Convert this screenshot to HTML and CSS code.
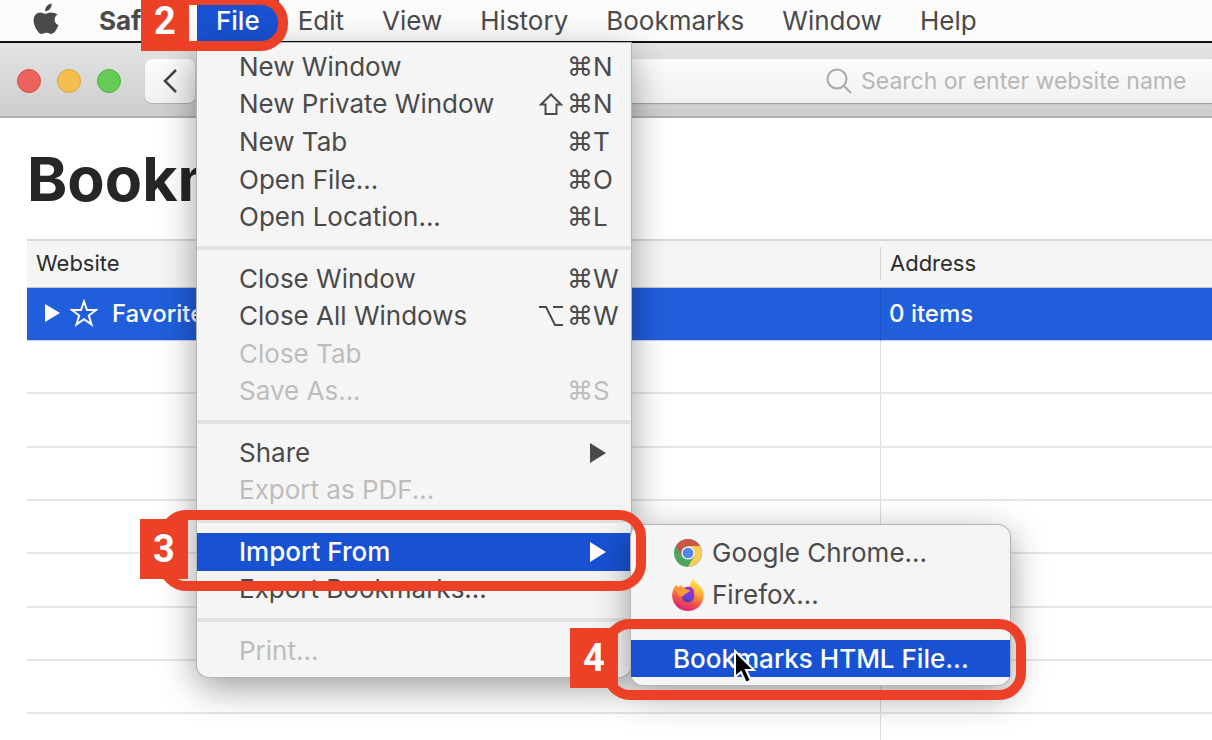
FILE: index.html
```html
<!DOCTYPE html>
<html lang="en">
<head>
<meta charset="utf-8">
<title>Bookmarks</title>
<link rel="stylesheet" href="styles.css">
</head>
<body>
<nav class="menubar" aria-label="Menu bar">
  <button class="menubar-item apple" aria-label="Apple menu">
    <svg viewBox="0 0 26 32" width="26" height="32" aria-hidden="true">
      <path fill="#4a4a4a" d="M18.6 0.6c.3 2.100-.5 4-1.700 5.400-1.200 1.400-3 2.300-4.700 2.200-.3-2 .6-4 1.700-5.200C15.200 1.600 17.100.7 18.600.6zM24.600 11.400c-1.900 1.200-3 2.900-3 5.100 0 2.600 1.500 4.600 3.900 5.600-.6 1.900-1.500 3.700-2.700 5.400-1.200 1.700-2.500 3.400-4.500 3.400-1.900 0-2.500-1.200-4.800-1.200-2.300 0-3 1.200-4.800 1.200-2 0-3.400-1.800-4.600-3.500C2 24.400.6 20.900.6 17.600c0-5.200 3.400-8 6.700-8 2 0 3.700 1.300 4.900 1.300 1.200 0 3.100-1.400 5.500-1.400 2.800 0 5.200 1 6.900 1.900z"/>
    </svg>
  </button>
  <button class="menubar-item app-name">Safari</button>
  <div class="menubar-slot">
    <button class="menubar-item active" aria-haspopup="menu" aria-expanded="true">File</button>
    <div class="callout callout-file"><span class="callout-number">2</span></div>
    <div class="menu file-menu">
      <div class="menu-group">
        <button class="menu-item">New Window<kbd><span>⌘</span><b>N</b></kbd></button>
        <button class="menu-item">New Private Window<kbd><svg class="shift" viewBox="0 0 24 24" width="24" height="24" aria-label="Shift"><path d="M12 2.500 2 12.500h4.500V22h11v-9.500H22z"/></svg><span>⌘</span><b>N</b></kbd></button>
        <button class="menu-item">New Tab<kbd><span>⌘</span><b>T</b></kbd></button>
        <button class="menu-item">Open File...<kbd><span>⌘</span><b>O</b></kbd></button>
        <button class="menu-item">Open Location...<kbd><span>⌘</span><b>L</b></kbd></button>
      </div>
      <hr>
      <div class="menu-group">
        <button class="menu-item">Close Window<kbd><span>⌘</span><b>W</b></kbd></button>
        <button class="menu-item">Close All Windows<kbd><svg class="option" viewBox="0 0 24 24" width="24" height="24" aria-label="Option"><path d="M0 3h7l9 18h8M14 3h10"/></svg><span>⌘</span><b>W</b></kbd></button>
        <button class="menu-item" disabled>Close Tab</button>
        <button class="menu-item" disabled>Save As...<kbd><span>⌘</span><b>S</b></kbd></button>
      </div>
      <hr>
      <div class="menu-group">
        <button class="menu-item">Share<span class="arrow"></span></button>
        <button class="menu-item" disabled>Export as PDF...</button>
      </div>
      <hr>
      <div class="menu-group">
        <div class="menu-slot">
          <button class="menu-item selected" aria-haspopup="menu" aria-expanded="true">Import From<span class="arrow"></span></button>
          <div class="menu submenu">
            <button class="menu-item with-icon">
              <svg viewBox="-2 -2 32 32" width="32" height="32" aria-hidden="true">
                <circle cx="14" cy="14" r="14" fill="#4ea562"/>
                <path fill="#f8ce5b" d="M14 7h12.100A14 14 0 0 1 14 28l6.100-10.500z"/>
                <path fill="#cf5348" d="M1.900 7A14 14 0 0 1 26.100 7H14a7 7 0 0 0-6.500 9.300z"/>
                <circle cx="14" cy="14" r="6.600" fill="#f3f3f3"/>
                <circle cx="14" cy="14" r="5.300" fill="#4f86ec"/>
              </svg>
              Google Chrome...
            </button>
            <button class="menu-item with-icon">
              <svg viewBox="0 0 32 32" width="32" height="32" aria-hidden="true">
                <defs>
                  <linearGradient id="fire" x1=".75" y1="0" x2=".35" y2="1">
                    <stop offset="0" stop-color="#fff04f"/><stop offset=".4" stop-color="#ffa436"/><stop offset=".7" stop-color="#f4504a"/><stop offset="1" stop-color="#d8207c"/>
                  </linearGradient>
                  <linearGradient id="globe" x1=".6" y1="0" x2=".4" y2="1">
                    <stop offset="0" stop-color="#a13bea"/><stop offset="1" stop-color="#4b42b4"/>
                  </linearGradient>
                </defs>
                <path fill="url(#fire)" d="M21 0c1.500 3 6 5 8.500 9 2 3.500 2.500 6 2 9.500C30.500 26.500 24 32 16 32S.5 26 .2 17.500C0 12.500 2 8 4.500 5.500L6 8.500l3.500-2.800.8 2.800c2.500-.5 5 .2 6.700 1.500 1-3 1.500-7 4-10z"/>
                <circle cx="16" cy="17" r="6.400" fill="url(#globe)"/>
                <path fill="#8b35d6" d="M12 9c4-2.500 9-1 10 3l-1 6-8-5z"/>
                <path fill="#ff9838" d="M5 9l5-1c3 1 4.500 2.500 7 2.800 1.200.2.800 1.700-.2 2.200l-3 1.500c-2 1-1.500 2.500-4 3-2 .5-3.500-1-4.800-4z"/>
              </svg>
              Firefox...
            </button>
            <hr>
            <button class="menu-item selected">Bookmarks HTML File...</button>
            <svg class="pointer" viewBox="0 0 24 36" width="24" height="36" aria-hidden="true"><path fill="#000" stroke="#fff" stroke-width="2" d="M2 2v26l6-5 5 11 5-2.500-5-10.500h8z"/></svg>
            <div class="callout callout-html"><span class="callout-number">4</span></div>
          </div>
          <div class="callout callout-import"><span class="callout-number">3</span></div>
        </div>
        <button class="menu-item">Export Bookmarks...</button>
      </div>
      <hr>
      <div class="menu-group">
        <button class="menu-item" disabled>Print...<kbd><span>⌘</span><b>P</b></kbd></button>
      </div>
    </div>
  </div>
  <button class="menubar-item">Edit</button>
  <button class="menubar-item">View</button>
  <button class="menubar-item">History</button>
  <button class="menubar-item">Bookmarks</button>
  <button class="menubar-item">Window</button>
  <button class="menubar-item">Help</button>
</nav>

<header class="toolbar">
  <div class="lights">
    <button class="light close" aria-label="Close"></button>
    <button class="light minimize" aria-label="Minimize"></button>
    <button class="light zoom" aria-label="Zoom"></button>
  </div>
  <button class="back" aria-label="Back">
    <svg viewBox="0 0 16 26" width="16" height="26" aria-hidden="true"><path fill="none" stroke="#444" stroke-width="2.500" d="M14 2 3 13l11 11"/></svg>
  </button>
  <label class="address">
    <svg viewBox="0 0 26 26" width="26" height="26" aria-hidden="true"><g fill="none" stroke="#a8a8a8" stroke-width="2"><circle cx="11" cy="11" r="9.500"/><path d="m18 18 7 7"/></g></svg>
    <input type="text" aria-label="Address" placeholder="Search or enter website name">
  </label>
</header>

<main class="page">
  <h1>Bookmarks</h1>
  <table class="bookmarks">
    <thead>
      <tr><th scope="col" class="col-site">Website</th><th scope="col"><span class="divided">Address</span></th></tr>
    </thead>
    <tbody>
      <tr class="row-selected">
        <td>
          <div class="folder">
            <span class="disclosure"></span>
            <svg viewBox="0 0 28 28" width="28" height="28" aria-hidden="true"><path fill="none" stroke="#fff" stroke-width="2" d="m14 2.500 3 8.500h9l-7.200 5.500 2.700 9-7.500-5.300-7.500 5.300 2.700-9L2 11h9z"/></svg>
            Favorites
          </div>
        </td>
        <td>0 items</td>
      </tr>
      <tr><td></td><td></td></tr>
      <tr><td></td><td></td></tr>
      <tr><td></td><td></td></tr>
      <tr><td></td><td></td></tr>
      <tr><td></td><td></td></tr>
      <tr><td></td><td></td></tr>
      <tr><td></td><td></td></tr>
      <tr><td></td><td></td></tr>
    </tbody>
  </table>
</main>
</body>
</html>
```
FILE: styles.css
```css
* { box-sizing: border-box; }

body {
  margin: 0;
  height: 100vh;
  display: flex;
  flex-direction: column;
  overflow: hidden;
  background: #fff;
  color: #4a4a4a;
  font-family: Inter, Roboto, sans-serif;
  font-size: 26px;
}

button {
  border: 0;
  padding: 0;
  background: none;
  color: inherit;
  font: inherit;
  text-align: left;
  white-space: nowrap;
}

/* Menu bar */
.menubar {
  position: relative;
  z-index: 2;
  flex: none;
  display: flex;
  height: 43px;
  padding-left: 14px;
  background: #fcfcfc;
  border-bottom: 2px solid #111;
}

.menubar-item {
  height: 41px;
  padding: 0 19px;
}

.apple svg { display: block; margin-top: -4px; }

.app-name { font-weight: 700; width: 119px; padding-right: 0; padding-left: 21px; }

.menubar-slot { position: relative; }

.menubar-item.active {
  background: #1852d3;
  color: #fff;
  font-weight: 500;
}

/* Menus */
.menu {
  position: absolute;
  padding: 5px 0 8px;
  background: #f5f5f5;
  border-radius: 0 0 12px 12px;
  box-shadow: 0 0 0 1px #b4b4b4, 0 10px 36px rgba(0, 0, 0, .4);
}

.file-menu {
  left: 0;
  top: 43px;
  width: 434px;
}

.submenu {
  left: 100%;
  top: -8px;
  width: 379px;
  padding-top: 7px;
  border-radius: 12px;
}

.menu hr {
  height: 24px;
  margin: 0;
  padding: 10px 0;
  border: 0;
  background: #e2e2e2 content-box;
}

.menu-group { display: grid; grid-auto-rows: 1fr; }
.menu-group:has(> :nth-child(2)) { height: 75px; }
.menu-group:has(> :nth-child(4)) { height: 150px; }
.menu-group:has(> :nth-child(5)) { height: 188px; }

.menu-slot { position: relative; display: grid; }

.menu-item {
  display: flex;
  align-items: center;
  width: 100%;
  min-height: 37px;
  padding: 0 0 0 42px;
  line-height: 32px;
}

.menu-item:disabled { color: #bdbdbd; }

.menu-item.selected {
  background: #1852d3;
  color: #fff;
  font-weight: 500;
}

.menu-item.with-icon {
  height: 42px;
  gap: 8px;
  padding-left: 41px;
}

.menu-item kbd {
  display: flex;
  align-items: center;
  margin-left: auto;
  font: inherit;
}

.menu-item kbd span {
  width: 26px;
  font-family: "DejaVu Sans", sans-serif;
}

.menu-item kbd b {
  width: 38px;
  font-weight: 400;
}

.menu-item kbd svg {
  margin-right: 4px;
  fill: none;
  stroke: currentColor;
  stroke-width: 2;
}

.arrow {
  margin-left: auto;
  margin-right: 25px;
  border: 10px solid transparent;
  border-left: 16px solid currentColor;
  border-right: 0;
}

.pointer {
  position: absolute;
  left: 102px;
  top: 124px;
}

/* Numbered callouts */
.callout {
  position: absolute;
  height: 81px;
  border: 10px solid #ec4126;
  border-radius: 27px;
  pointer-events: none;
}

.callout-number {
  position: absolute;
  top: -1px;
  display: grid;
  place-items: center;
  width: 48px;
  height: 60px;
  background: #ec4126;
  color: #fff;
  font: 700 38px "Liberation Sans Narrow", Roboto, sans-serif;
}

.callout-file { left: -37px; top: -5px; width: 128px; height: 56px; z-index: 1; }
.callout-file .callout-number { left: -29px; top: -14px; }

.callout-import { left: -38px; top: -23px; width: 487px; }
.callout-import .callout-number { left: -29px; }

.callout-html { left: -28px; bottom: -15px; width: 423px; }
.callout-html .callout-number { left: -43px; }

/* Window toolbar */
.toolbar {
  flex: none;
  display: flex;
  align-items: center;
  height: 75px;
  padding-top: 3px;
  padding-left: 17px;
  background: linear-gradient(#e4e4e4, #cdcdcd);
  border-bottom: 2px solid #b0b0b0;
}

.lights { display: flex; gap: 16px; }

.light {
  width: 24px;
  height: 24px;
  border-radius: 50%;
  border: 1px solid;
}

.close { background: #ec625c; border-color: #d4504a; }
.minimize { background: #f5bf4f; border-color: #dba53a; }
.zoom { background: #66cb55; border-color: #50b03f; }

.back {
  flex: none;
  display: grid;
  place-items: center;
  width: 50px;
  height: 44px;
  margin-left: 24px;
  border-radius: 7px;
  background: linear-gradient(#fcfcfc, #f1f1f1);
  box-shadow: 0 1px 1px #aaa;
}

.address {
  flex: 1;
  display: flex;
  align-items: center;
  gap: 9px;
  height: 44px;
  margin-left: 405px;
  padding-left: 226px;
  background: linear-gradient(#fcfcfc, #f1f1f1);
  box-shadow: 0 1px 1px #a4a4a4;
}

.address svg { flex: none; }

.address input {
  flex: 1;
  min-width: 0;
  padding: 0;
  border: 0;
  outline: 0;
  background: none;
  font: 23px Inter, Roboto, sans-serif;
}

.address input::placeholder { color: #b7b7b7; opacity: 1; }

/* Bookmarks list */
.page {
  flex: 1;
  min-height: 0;
  overflow: hidden;
  padding: 23px 0 0 27px;
}

h1 {
  margin: 0 0 22px;
  color: #262626;
  font-size: 61px;
  line-height: 76px;
  font-weight: 700;
}

.bookmarks {
  width: 100%;
  border-collapse: separate;
  border-spacing: 0;
  table-layout: fixed;
  color: #2c2c2c;
  font-size: 22px;
}

.bookmarks th {
  height: 49px;
  padding: 0 9px 2px;
  background: #f5f5f5;
  border-top: 2px solid #d8d8d8;
  border-bottom: 1px solid #c4c4c4;
  font-weight: 400;
  text-align: left;
}

.bookmarks th + th { padding-left: 0; }

.divided {
  display: block;
  padding-left: 9px;
  border-left: 1px solid #d4d4d4;
  line-height: 33px;
}

.col-site { width: 853px; }

.bookmarks td {
  height: 53px;
  padding: 0;
  border-bottom: 2px solid #e6e6e6;
}

.bookmarks td + td { border-left: 1px solid #dedede; padding-left: 8px; }
.bookmarks tr:nth-child(3n) td { height: 54px; }

.bookmarks .row-selected td {
  height: 53px;
  padding-bottom: 2px;
  border-bottom: 1px solid #c8d3ea;
  background: #205edb;
  color: #fff;
  font-size: 24px;
  font-weight: 500;
}

.bookmarks .row-selected td + td { border-left-color: #1c53c4; }

.folder {
  display: flex;
  align-items: center;
  padding-left: 18px;
}

.folder svg { margin: 0 14px 0 10px; }

.disclosure {
  border: 9px solid transparent;
  border-left: 15px solid #fff;
  border-right: 0;
}
```
